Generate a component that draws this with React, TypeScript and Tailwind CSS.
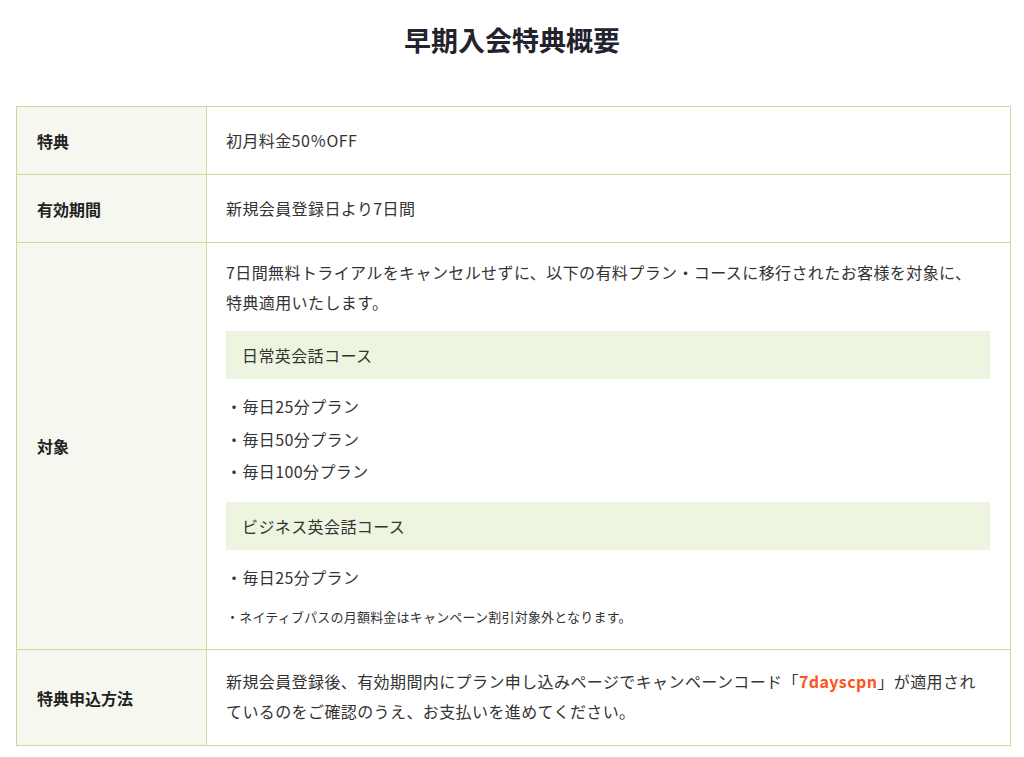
import React from "react";

const font = { fontFamily: '"Noto Sans CJK JP", "Noto Sans", sans-serif' };

export default function App() {
  const th =
    "w-[190px] border border-[#c3de9f] bg-[#f6f7ef] pl-[20px] pr-4 align-middle text-[16px] font-bold text-[#222]";
  const td =
    "border border-[#c3de9f] bg-white pl-[19px] pr-[20px] align-top text-[16px] leading-[30px] tracking-[0.4px] text-[#333]";
  return (
    <div className="min-h-[757px] w-[1024px] bg-white" style={font}>
      <h1 className="pt-[22px] text-center text-[27px] font-bold leading-[36px] text-[#23232e]">
        早期入会特典概要
      </h1>
      <div className="pl-4 pt-[48px]">
        <table className="w-[995px] border-collapse">
          <tbody>
            <tr>
              <th className={th + " h-[68px] text-left"}>特典</th>
              <td className={td + " py-[18px]"}>初月料金50％OFF</td>
            </tr>
            <tr>
              <th className={th + " h-[68px] text-left"}>有効期間</th>
              <td className={td + " py-[18px]"}>新規会員登録日より7日間</td>
            </tr>
            <tr>
              <th className={th + " text-left"}>対象</th>
              <td className={td + " pt-[14px] pb-[20px]"}>
                <p>
                  7日間無料トライアルをキャンセルせずに、以下の有料プラン・コースに移行されたお客様を対象に、
                  <br />
                  特典適用いたします。
                </p>
                <div className="mt-[14px] flex h-[48px] items-center bg-[#edf5e1] pl-4">
                  日常英会話コース
                </div>
                <div className="mt-[12px] flex flex-col gap-[2.5px]">
                  <p>・毎日25分プラン</p>
                  <p>・毎日50分プラン</p>
                  <p>・毎日100分プラン</p>
                </div>
                <div className="mt-[16px] flex h-[48px] items-center bg-[#edf5e1] pl-4">
                  ビジネス英会話コース
                </div>
                <p className="mt-[12px]">・毎日25分プラン</p>
                <p className="mt-[13px] text-[13px] leading-[24px] tracking-[0.2px]">
                  ・ネイティブパスの月額料金はキャンペーン割引対象外となります。
                </p>
              </td>
            </tr>
            <tr>
              <th className={th + " h-[96px] text-left"}>特典申込方法</th>
              <td className={td + " pt-[16px] pb-[19px]"}>
                新規会員登録後、有効期間内にプラン申し込みページでキャンペーンコード「
                <span className="font-bold text-[#fb5420]">7dayscpn</span>
                」が適用され
                <br />
                ているのをご確認のうえ、お支払いを進めてください。
              </td>
            </tr>
          </tbody>
        </table>
      </div>
    </div>
  );
}
